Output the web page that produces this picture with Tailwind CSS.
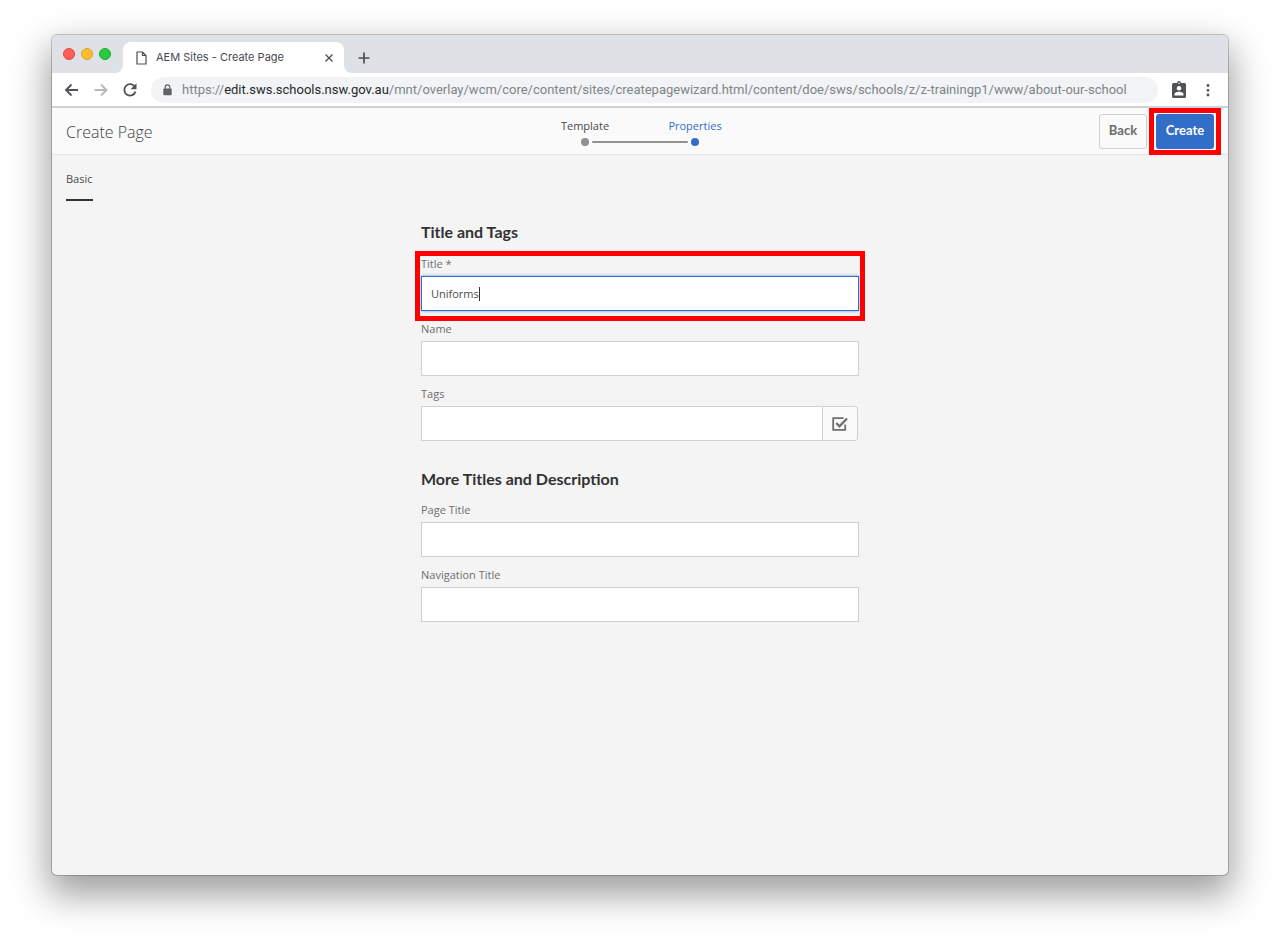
<!DOCTYPE html>
<html lang="en">
<head>
<meta charset="utf-8">
<title>AEM Sites - Create Page</title>
<script src="https://cdn.jsdelivr.net/npm/@tailwindcss/browser@4"></script>
</head>
<body class="flex min-h-screen flex-col bg-white px-[52px] pt-[35px] pb-[68px] font-['Open_Sans',sans-serif] text-[#4b4b4b]">
<div class="flex grow flex-col rounded-[5px] bg-[#f4f4f4] shadow-[0_0_0_1px_rgba(0,0,0,0.2),0_16px_36px_4px_rgba(0,0,0,0.38)]">

  <!-- Tab strip -->
  <div class="flex h-[38px] items-end rounded-t-[5px] bg-[#dee1e6] font-[Inter,sans-serif]">
    <div class="flex h-full w-[71px] items-center gap-[6px] pl-[11px]">
      <span class="size-3 rounded-full border border-[#e2463f] bg-[#ff5f57]"></span>
      <span class="size-3 rounded-full border border-[#e1a325] bg-[#ffbd2e]"></span>
      <span class="size-3 rounded-full border border-[#1dad2b] bg-[#28ca42]"></span>
    </div>
    <div class="relative flex h-[31px] w-[221px] items-center rounded-t-lg bg-white pl-[13px] pr-[9px]">
      <span class="absolute bottom-0 -left-2 size-2 bg-white"><span class="block size-2 rounded-br-lg bg-[#dee1e6]"></span></span>
      <span class="absolute -right-2 bottom-0 size-2 bg-white"><span class="block size-2 rounded-bl-lg bg-[#dee1e6]"></span></span>
      <svg class="h-[14px] w-[11px]" viewBox="0 0 11 14" fill="none" stroke="#4a4d51" stroke-width="1.2"><path d="M1 1h5.5L10 4.500V13H1z M6.500 1v3.500H10"/></svg>
      <span class="ml-[9px] grow whitespace-nowrap text-[11px] text-[#45494d]">AEM Sites - Create Page</span>
      <button aria-label="Close tab" class="grid size-3 place-items-center"><svg class="size-2" viewBox="0 0 8 8" stroke="#4a4d51" stroke-width="1.3"><path d="M.5.5l7 7M7.500.5l-7 7"/></svg></button>
    </div>
    <button aria-label="New tab" class="ml-[14px] grid h-[31px] w-3 place-items-center"><svg class="size-3" viewBox="0 0 12 12" stroke="#4a4d51" stroke-width="1.7"><path d="M6 .5v11M.5 6h11"/></svg></button>
  </div>

  <!-- Address bar -->
  <div class="flex h-[35px] items-center border-b-2 border-[#cfd2d2] bg-white pl-3 pr-4 font-[Inter,sans-serif]">
    <button aria-label="Back in history"><svg class="size-4" viewBox="0 0 16 16" fill="none" stroke="#505357" stroke-width="1.800"><path d="M14 8H2.500M7.500 2.500L2 8l5.500 5.500"/></svg></button>
    <button aria-label="Forward in history" class="ml-[13px]"><svg class="size-4" viewBox="0 0 16 16" fill="none" stroke="#b6b8ba" stroke-width="1.800"><path d="M1.500 8H13M8 2.500L13.500 8 8 13.500"/></svg></button>
    <button aria-label="Reload" class="ml-[13px]"><svg class="size-4" viewBox="0 0 16 16"><path d="M12.900 4.800A5.700 5.700 0 1 0 13.500 9.600" fill="none" stroke="#505357" stroke-width="1.800"/><path d="M14.500 1.200v6H8.500z" fill="#505357"/></svg></button>
    <div class="ml-[13px] flex h-[26px] min-w-0 grow items-center rounded-full bg-[#f1f3f4] pl-3">
      <svg class="h-3 w-[9px] shrink-0" viewBox="0 0 9 12"><path d="M2.200 5V3.200a2.300 2.300 0 0 1 4.600 0V5" fill="none" stroke="#5f6368" stroke-width="1.200"/><rect x=".3" y="4.500" width="8.400" height="6.700" rx="1" fill="#5f6368"/></svg>
      <span class="ml-[10px] whitespace-nowrap font-[Roboto,sans-serif] text-[13px] text-[#80858a]">https://<span class="text-[#26292d]">edit.sws.schools.nsw.gov.au</span>/mnt/overlay/wcm/core/content/sites/createpagewizard.html/content/doe/sws/schools/z/z-trainingp1/www/about-our-school</span>
    </div>
    <button aria-label="Profile" class="ml-[14px]"><svg class="h-[18px] w-[14px]" viewBox="0 0 14 18"><path d="M1.500 2H5a2 2 0 0 1 4 0h3.500A1.500 1.500 0 0 1 14 3.500v12a1.500 1.500 0 0 1-1.500 1.500h-11A1.500 1.500 0 0 1 0 15.500v-12A1.500 1.500 0 0 1 1.500 2z" fill="#505357"/><circle cx="7" cy="2.300" r=".8" fill="#fff"/><circle cx="7" cy="7.300" r="2.200" fill="#fff"/><path d="M2.500 14.500v-1.300c0-1.700 3-2.400 4.500-2.400s4.500.7 4.500 2.400v1.300z" fill="#fff"/></svg></button>
    <button aria-label="Browser menu" class="ml-[18px]"><svg class="h-[14px] w-2" viewBox="0 0 8 14" fill="#505357"><circle cx="4" cy="2.500" r="1.400"/><circle cx="4" cy="7.300" r="1.400"/><circle cx="4" cy="12" r="1.400"/></svg></button>
  </div>

  <!-- Wizard header -->
  <header class="grid h-[47px] grid-cols-[1fr_auto_1fr] items-center border-b border-[#e4e4e4] bg-[#fafafa] px-[14px]">
    <h1 class="pt-px text-base font-light text-[#3f3f3f]">Create Page</h1>
    <ol class="relative grid w-[220px] grid-cols-2 pt-[2px] text-center text-[11px] leading-4">
      <li class="flex flex-col items-center gap-1">Template<span class="size-2 rounded-full bg-[#919191]"></span></li>
      <li class="flex flex-col items-center gap-1 text-[#326ec8]">Properties<span class="size-2 rounded-full bg-[#326ec8]"></span></li>
      <li aria-hidden="true" class="absolute bottom-[3px] left-[62px] h-[2px] w-24 rounded bg-[#919191]"></li>
    </ol>
    <div class="flex justify-end gap-[9px] font-[Lato,sans-serif] text-[13px] font-bold">
      <button class="h-[35px] w-12 rounded-[3px] border border-[#d0d0d0] bg-[#fafafa] text-[#6b6b6b]">Back</button>
      <div class="relative">
        <button class="h-[35px] w-[58px] rounded-[3px] bg-[#326ec8] text-white">Create</button>
        <span class="pointer-events-none absolute -inset-x-[7px] -inset-y-[6px] border-5 border-[#ff0000]"></span>
      </div>
    </div>
  </header>

  <nav class="flex px-[14px] pt-4">
    <a href="#basic" class="border-b-2 border-[#323232] pb-3 text-[11px] leading-4 text-[#4b4b4b]">Basic</a>
  </nav>

  <form id="basic" class="mx-auto mt-[19px] w-[438px] max-w-full text-[11px] leading-4 text-[#6e6e6e]">
    <h2 class="font-[Lato,sans-serif] text-base leading-6 font-bold text-[#323232]">Title and Tags</h2>
    <div class="relative mt-3">
      <label for="title" class="block pb-1">Title *</label>
      <input id="title" required value="Uniforms" class="block h-[35px] w-full border border-[#326ec8] bg-white px-[9px] text-[#4b4b4b] shadow-[0_0_3px_rgba(50,110,200,0.7)] outline-none">
      <span class="absolute bottom-[10px] left-[58px] h-[14px] w-px bg-[#323232]"></span>
      <span class="pointer-events-none absolute -inset-x-[6px] -top-[5px] -bottom-[10px] border-5 border-[#ff0000]"></span>
    </div>
    <div class="mt-[10px]">
      <label for="name" class="block pb-1">Name</label>
      <input id="name" class="block h-[35px] w-full border border-[#d0d0d0] bg-white px-[9px]">
    </div>
    <div class="mt-[10px]">
      <label for="tags" class="block pb-1">Tags</label>
      <div class="flex pr-px">
        <input id="tags" class="block h-[35px] min-w-0 grow border border-[#d0d0d0] bg-white px-[9px]">
        <button type="button" aria-label="Open tag browser" class="-ml-px grid h-[35px] w-9 place-items-center rounded-r-[3px] border border-[#d0d0d0] bg-[#fafafa]"><svg class="size-4" viewBox="0 0 16 16" fill="none" stroke="#6e6e6e"><path d="M11.500 2.200H1.200v11.600h12V8.500" stroke-width="1.800"/><path d="M4.300 7l3.200 3.300L15 2.500" stroke-width="2.300"/></svg></button>
      </div>
    </div>
    <h2 class="mt-[26px] font-[Lato,sans-serif] text-base leading-6 font-bold text-[#323232]">More Titles and Description</h2>
    <div class="mt-[11px]">
      <label for="page-title" class="block pb-1">Page Title</label>
      <input id="page-title" class="block h-[35px] w-full border border-[#d0d0d0] bg-white px-[9px]">
    </div>
    <div class="mt-[10px]">
      <label for="nav-title" class="block pb-1">Navigation Title</label>
      <input id="nav-title" class="block h-[35px] w-full border border-[#d0d0d0] bg-white px-[9px]">
    </div>
  </form>
</div>
</body>
</html>
